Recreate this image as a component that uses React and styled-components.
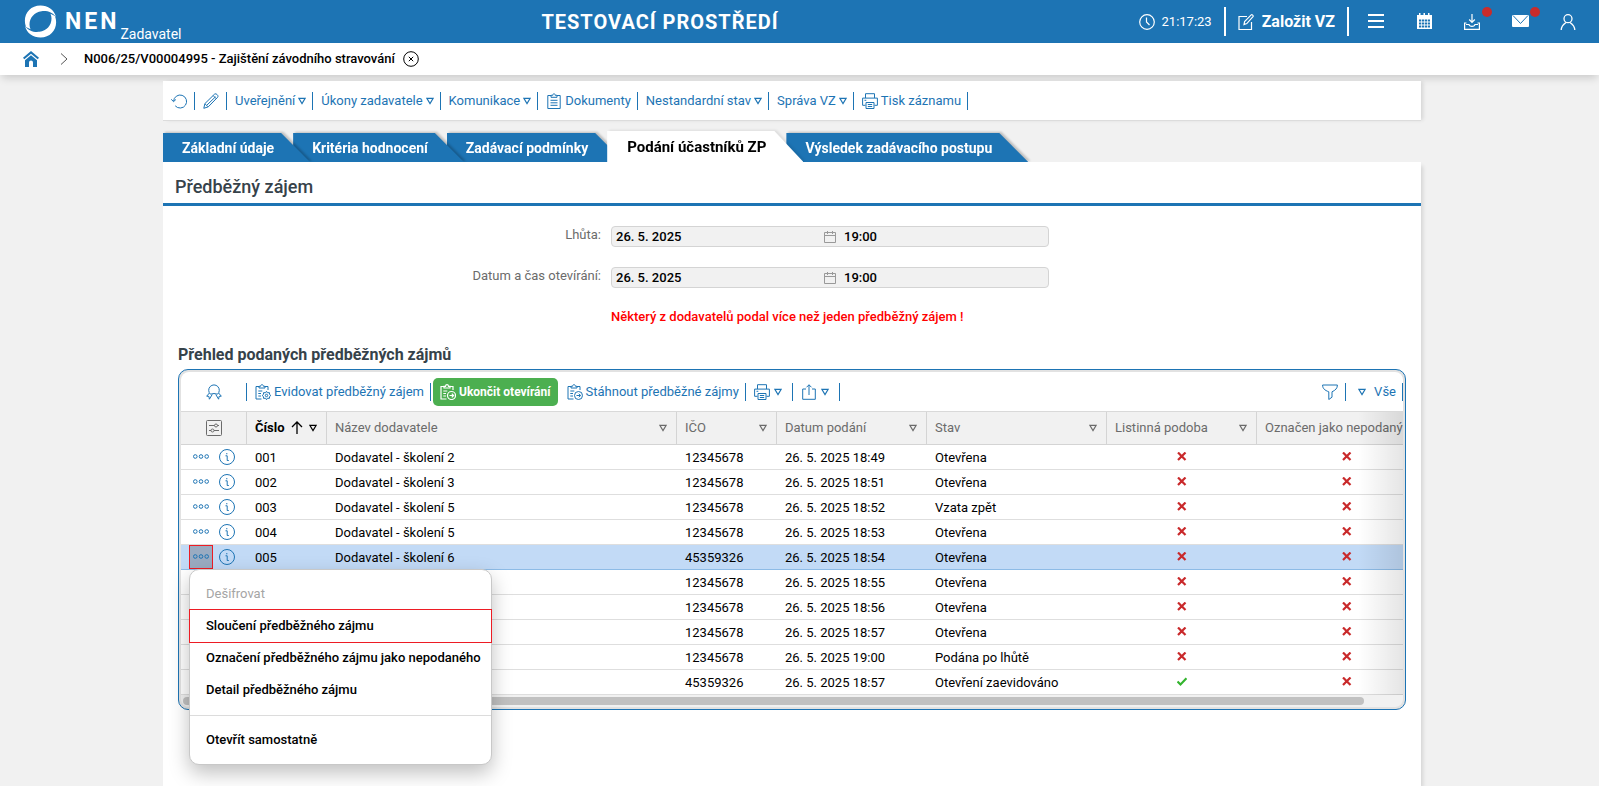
import React, { useState, useCallback } from "react";
import styled, { createGlobalStyle, css } from "styled-components";

const BLUE = "#1d74b4";

const icons = {
  clock: (
    <>
      <circle cx="8" cy="8" r="7.3" />
      <path d="M7.500 3.500V8l3 3" />
    </>
  ),
  edit: (
    <>
      <path d="M9 2.500H1v13h12.500V8" />
      <path d="M6 10.500l.6-3L13.200.9c.8-.7 2.500.8 1.800 1.700L8.800 9.600z" />
    </>
  ),
  download: (
    <>
      <path d="M8 0v8M5.200 5.500L8 8.300l2.800-2.800" />
      <path d="M2.500 9H.6v6.300h14.800V9h-1.900M2 10.500h3c.5 2.500 5.500 2.500 6 0h3" />
    </>
  ),
  user: (
    <>
      <circle cx="8" cy="4.700" r="4" />
      <path d="M1.200 16c0-4 2-5.500 4.800-7.500M14.800 16c0-4-2-5.500-4.800-7.500" />
    </>
  ),
  close: (
    <>
      <circle cx="8" cy="8" r="7.300" />
      <path d="M5.800 5.800l4.400 4.400M10.200 5.800l-4.400 4.400" />
    </>
  ),
  chevron: <path d="M5 2.500L11 8l-6 5.500" />,
  refresh: (
    <>
      <path d="M2.600 8.200A6.500 6.500 0 1 1 4.200 12.800" />
      <path d="M.3 6.300l2.200 2.400L4.900 6.500" />
    </>
  ),
  pencil: (
    <>
      <path d="M.8 15.300l1.100-4.700L11.500 1.200c1.300-1.500 4.500 1.500 3.200 3L5.300 13.800z" />
      <path d="M2 10.800l3 3M10.200 2.600l3.200 3.200M4 12L12.500 3.800" />
    </>
  ),
  clipboard: (
    <>
      <path d="M5 2.500H1.800v13h12.400v-13H11" />
      <path d="M5 4.300V2.300h1.800c.2-2.200 2.200-2.200 2.400 0H11v2zM4.500 7.300h7M4.500 9.800h7M4.500 12.300h7" />
    </>
  ),
  print: (
    <>
      <path d="M3.500 5V.7h9V5M3.500 12.300H.6V5.100h14.800v7.200h-2.900" />
      <path d="M4 9.500h8v6H4zM5.800 11.500h4.400M5.800 13.500h4.400M2.500 7.300h1.800" />
    </>
  ),
  badge: (
    <>
      <path d="M4.500 10.200A5.300 5.300 0 1 1 11.500 10.200Q8 8.800 4.500 10.200z" />
      <path d="M3.400 9L.7 12.200l2.200.2.500 2.800 2.800-4.700M12.600 9l2.700 3.200-2.200.2-.5 2.800-2.800-4.700" />
    </>
  ),
  clipGear: (
    <>
      <path d="M4 2.500H1v12.500h5.500M10 2.500h3V6" />
      <path d="M4 4V2.300h1.500c.2-2.200 2.800-2.200 3 0H10V4zM3.300 7h4M3.300 9.500h2.700M3.300 12h2.700" />
      <circle cx="11.500" cy="11.500" r="1.200" />
      <path d="M11.500 7.300l1 1.500 1.900-.2.200 1.900 1.200 1-1.200 1-.2 1.900-1.900-.2-1 1.500-1-1.500-1.900.2-.2-1.900-1.200-1 1.200-1 .2-1.900 1.900.2z" />
    </>
  ),
  clipArrow: (
    <>
      <path d="M4 2.500H1v12.500h5.500M10 2.500h3V6" />
      <path d="M4 4V2.300h1.500c.2-2.200 2.800-2.200 3 0H10V4zM3.300 7h4M3.300 9.500h2.700M3.300 12h2.700" />
      <circle cx="11.500" cy="11.500" r="4" />
      <path d="M9.500 11.500h4M11.800 9.700l1.800 1.800-1.800 1.800" />
    </>
  ),
  share: (
    <>
      <path d="M5 5H1.700v10.300h12.600V5H11" />
      <path d="M8 11V.8M5.500 3.300L8 .8l2.500 2.500" />
    </>
  ),
  funnel: <path d="M.6 1h14.800c0 3.500-2 5.200-5.400 6.800v5.400l-3.200 2.300V7.800C2.600 6.200.6 4.500.6 1z" />,
  settings: (
    <>
      <rect x=".5" y=".5" width="15" height="15" rx="1" />
      <path d="M3 5.500h5.500M11.500 5.500H13M3 10.500h2M8 10.500h5" />
      <circle cx="10" cy="5.500" r="1.500" />
      <circle cx="6.500" cy="10.500" r="1.500" />
    </>
  ),
  dots: (
    <>
      <circle cx="2.300" cy="7.500" r="1.800" />
      <circle cx="8" cy="7.500" r="1.800" />
      <circle cx="13.700" cy="7.500" r="1.800" />
    </>
  ),
  info: (
    <>
      <circle cx="8" cy="8" r="7.500" />
      <path d="M6.500 6.800h1.700v4.700h1.600M7.800 4v1.300" />
    </>
  ),
  calendar: <path d="M2.500 3.500h11v10h-11zM2.500 6.500h11M5.500 2v3M10.500 2v3" />,
  up: <path d="M8 14V2M3 7l5-5 5 5" />,
};

const Icon = ({ name, size = 16, weight = 1 }) => (
  <Svg width={size} height={size} viewBox="0 0 16 16" strokeWidth={weight}>
    {icons[name]}
  </Svg>
);

const Triangle = () => (
  <Svg width="8" height="8" viewBox="0 0 8 8" strokeWidth="1.100">
    <path d="M.9 1.400h6.200L4 6.600z" />
  </Svg>
);

const recordActions = [
  { label: "Uveřejnění", menu: true },
  { label: "Úkony zadavatele", menu: true },
  { label: "Komunikace", menu: true },
  { label: "Dokumenty", icon: "clipboard" },
  { label: "Nestandardní stav", menu: true },
  { label: "Správa VZ", menu: true },
  { label: "Tisk záznamu", icon: "print" },
];

const tabs = [
  "Základní údaje",
  "Kritéria hodnocení",
  "Zadávací podmínky",
  "Podání účastníků ZP",
  "Výsledek zadávacího postupu",
];

const columns = [
  { label: "Název dodavatele", width: 350 },
  { label: "IČO", width: 100 },
  { label: "Datum podání", width: 150 },
  { label: "Stav", width: 180 },
  { label: "Listinná podoba", width: 150 },
  { label: "Označen jako nepodaný", width: 180 },
];

const rows = [
  ["001", "Dodavatel - školení 2", "12345678", "18:49", "Otevřena"],
  ["002", "Dodavatel - školení 3", "12345678", "18:51", "Otevřena"],
  ["003", "Dodavatel - školení 5", "12345678", "18:52", "Vzata zpět"],
  ["004", "Dodavatel - školení 5", "12345678", "18:53", "Otevřena"],
  ["005", "Dodavatel - školení 6", "45359326", "18:54", "Otevřena"],
  ["", "", "12345678", "18:55", "Otevřena"],
  ["", "", "12345678", "18:56", "Otevřena"],
  ["", "", "12345678", "18:57", "Otevřena"],
  ["", "", "12345678", "19:00", "Podána po lhůtě"],
  ["", "", "45359326", "18:57", "Otevření zaevidováno", true],
];

const Mark = ({ ok }) => (
  <Flag $ok={ok} width="10" height="10" viewBox="0 0 10 10" strokeWidth="2.200">
    {ok ? <path d="M.5 4.500L3.500 7.500 9.500 1.300" /> : <path d="M1 .5L8.500 8M8.500.5L1 8" />}
  </Flag>
);

const DateTimeField = ({ id, label, date, time }) => (
  <>
    <Label htmlFor={id}>{label}</Label>
    <FieldBox>
      <FieldInput id={id} defaultValue={date} readOnly />
      <Icon name="calendar" />
      <FieldInput aria-label={`${label} čas`} defaultValue={time} readOnly />
    </FieldBox>
  </>
);

const App = () => {
  const [activeTab, setActiveTab] = useState(3);
  const [openRow, setOpenRow] = useState(4);
  const toggleRow = useCallback((i) => {
    setOpenRow((current) => (current === i ? -1 : i));
  }, []);

  return (
    <Page>
      <GlobalStyle />
      <Header>
        <Brand href="#">
          <svg width="33" height="33" viewBox="0 0 33 33" fill="#fff">
            <path d="M2 22C-2 11 5 .5 16.500.5 24 .5 30 4.500 32 12c-3.500-5-9-6.500-14.500-5.800C10.500 7.200 5.500 12.500 5.500 19.500c0 1.500.3 3 1 4.800z" />
            <path d="M31 11c4 11-3 21.500-14.500 21.500C9 32.500 3 28.500 1 21c3.500 5 9 6.500 14.500 5.800 7-1 12-6.300 12-13.300 0-1.500-.3-3-1-4.800z" />
          </svg>
          <BrandName>NEN</BrandName>
          <BrandRole>Zadavatel</BrandRole>
        </Brand>
        <EnvTitle>TESTOVACÍ PROSTŘEDÍ</EnvTitle>
        <HeaderTools>
          <Clock>
            <Icon name="clock" weight={1.2} />
            21:17:23
          </Clock>
          <CreateButton>
            <Icon name="edit" weight={1.2} />
            Založit VZ
          </CreateButton>
          <HeaderButton aria-label="Menu">
            <Svg width="16" height="16" viewBox="0 0 16 16" strokeWidth="2">
              <path d="M0 1h16M0 7h16M0 13h16" />
            </Svg>
          </HeaderButton>
          <HeaderButton aria-label="Kalendář">
            <svg width="17" height="17" viewBox="0 0 17 17" fill="#fff">
              <path
                fillRule="evenodd"
                d="M1 2h2V0h1.500v2h3V0H9v2h3V0h1.500v2H16v14H1zM3 6.500v2h2.300v-2zM6 6.500v2h2.300v-2zM9 6.500v2h2.300v-2zM12 6.500v2h2v-2zM3 9.500v2h2.300v-2zM6 9.500v2h2.300v-2zM9 9.500v2h2.300v-2zM12 9.500v2h2v-2zM3 12.500v2h2.300v-2zM6 12.500v2h2.300v-2zM9 12.500v2h2.300v-2zM12 12.500v2h2v-2z"
              />
            </svg>
          </HeaderButton>
          <HeaderButton aria-label="Stažené soubory">
            <Icon name="download" weight={1.2} />
            <Dot />
          </HeaderButton>
          <HeaderButton aria-label="Zprávy">
            <Svg width="17" height="17" viewBox="0 0 17 17" strokeWidth="1">
              <rect x="0" y="2" width="17" height="12" rx="1" fill="#fff" stroke="none" />
              <path d="M1 2.500l7.500 8 7.500-8" stroke={BLUE} />
            </Svg>
            <Dot />
          </HeaderButton>
          <HeaderButton aria-label="Uživatel">
            <Icon name="user" weight={1.3} />
          </HeaderButton>
        </HeaderTools>
      </Header>

      <Breadcrumb>
        <HomeLink href="#" aria-label="Domů">
          <svg width="16" height="16" viewBox="0 0 16 16" fill={BLUE}>
            <path d="M8 0l8 6.800-1.300 1.500L8 2.700 1.300 8.300 0 6.800z" />
            <path d="M2 9.200L8 4.300l6 4.900V16h-4v-4.500a2 2 0 0 0-4 0V16H2z" />
          </svg>
        </HomeLink>
        <Crumb>
          <Icon name="chevron" />
        </Crumb>
        <RecordName>N006/25/V00004995 - Zajištění závodního stravování</RecordName>
        <PlainButton aria-label="Zavřít">
          <Icon name="close" />
        </PlainButton>
      </Breadcrumb>

      <Main>
        <RecordBar>
          <IconAction aria-label="Obnovit">
            <Icon name="refresh" />
          </IconAction>
          <IconAction aria-label="Upravit">
            <Icon name="pencil" />
          </IconAction>
          {recordActions.map((a) => (
            <Action key={a.label}>
              {a.icon && <Icon name={a.icon} />}
              {a.label}
              {a.menu && <Triangle />}
            </Action>
          ))}
        </RecordBar>

        <Tabs>
          {tabs.map((t, i) => (
            <Tab
              key={t}
              $active={i === activeTab}
              $order={tabs.length - i}
              onClick={() => setActiveTab(i)}
            >
              <TabShape $active={i === activeTab}>{t}</TabShape>
            </Tab>
          ))}
        </Tabs>

        <Panel>
          <PanelTitle>Předběžný zájem</PanelTitle>
          <Form>
            <DateTimeField id="deadline" label="Lhůta:" date="26. 5. 2025" time="19:00" />
            <DateTimeField
              id="opening"
              label="Datum a čas otevírání:"
              date="26. 5. 2025"
              time="19:00"
            />
            <Warning>Některý z dodavatelů podal více než jeden předběžný zájem !</Warning>
          </Form>

          <Section>
            <SectionTitle>Přehled podaných předběžných zájmů</SectionTitle>
            <Frame>
              <GridBar>
                <BadgeAction aria-label="Zobrazení">
                  <Icon name="badge" />
                </BadgeAction>
                <Action>
                  <Icon name="clipGear" />
                  Evidovat předběžný zájem
                </Action>
                <FinishButton>
                  <Icon name="clipArrow" weight={1.2} />
                  Ukončit otevírání
                </FinishButton>
                <Action>
                  <Icon name="clipArrow" />
                  Stáhnout předběžné zájmy
                </Action>
                <MenuAction aria-label="Tisk">
                  <Icon name="print" />
                  <Triangle />
                </MenuAction>
                <MenuAction aria-label="Export">
                  <Icon name="share" />
                  <Triangle />
                </MenuAction>
                <Spacer />
                <IconAction aria-label="Filtr">
                  <Icon name="funnel" />
                </IconAction>
                <ViewAction>
                  <Triangle />
                  Vše
                </ViewAction>
              </GridBar>
              <Scroller>
                <Table>
                  <colgroup>
                    <Col $width={66} />
                    <Col $width={80} />
                    {columns.map((c) => (
                      <Col key={c.label} $width={c.width} />
                    ))}
                  </colgroup>
                  <thead>
                    <tr>
                      <Th>
                        <HeadCell $center>
                          <Icon name="settings" />
                        </HeadCell>
                      </Th>
                      <Th $sorted>
                        <HeadCell>
                          Číslo
                          <Icon name="up" weight={1.3} />
                          <Triangle />
                        </HeadCell>
                      </Th>
                      {columns.map((c) => (
                        <Th key={c.label}>
                          <HeadCell $spread>
                            {c.label}
                            <Triangle />
                          </HeadCell>
                        </Th>
                      ))}
                    </tr>
                  </thead>
                  <tbody>
                    {rows.map(([number, name, ico, time, state, paper], i) => (
                      <Row key={i} $selected={i === 4}>
                        <ToolsTd>
                          <RowTools>
                            <MoreButton
                              aria-label="Akce"
                              $open={i === openRow}
                              onClick={() => toggleRow(i)}
                            >
                              <Icon name="dots" />
                            </MoreButton>
                            <PlainButton aria-label="Detail">
                              <Icon name="info" />
                            </PlainButton>
                          </RowTools>
                        </ToolsTd>
                        <Td>{number}</Td>
                        <Td>{name}</Td>
                        <Td>{ico}</Td>
                        <Td>26. 5. 2025 {time}</Td>
                        <Td>{state}</Td>
                        <Td $center>
                          <Mark ok={paper} />
                        </Td>
                        <Td $center>
                          <Mark />
                        </Td>
                      </Row>
                    ))}
                  </tbody>
                </Table>
                <Fade />
              </Scroller>
              <ScrollTrack>
                <ScrollThumb />
              </ScrollTrack>
              {openRow >= 0 && (
                <Menu style={{ top: 99 + openRow * 25 }}>
                  <MenuItem disabled>Dešifrovat</MenuItem>
                  <MenuItem $marked>Sloučení předběžného zájmu</MenuItem>
                  <MenuItem>Označení předběžného zájmu jako nepodaného</MenuItem>
                  <MenuItem>Detail předběžného zájmu</MenuItem>
                  <MenuLine />
                  <MenuItem>Otevřít samostatně</MenuItem>
                </Menu>
              )}
            </Frame>
          </Section>
        </Panel>
      </Main>
    </Page>
  );
};

export default App;

const GlobalStyle = createGlobalStyle`
  * {
    box-sizing: border-box;
  }
  body {
    margin: 0;
    background: #f1f1f1;
    color: #000;
    font-family: Roboto, "Noto Sans", sans-serif;
    font-size: 13px;
    line-height: 16px;
  }
  button,
  input {
    font: inherit;
    color: inherit;
    background: none;
    border: 0;
    padding: 0;
    margin: 0;
  }
  button {
    cursor: pointer;
  }
`;
const Svg = styled.svg`
  display: block;
  flex: none;
  fill: none;
  stroke: currentColor;
`;
const Page = styled.div`
  min-height: 100vh;
  display: flex;
  flex-direction: column;
`;
const Header = styled.header`
  display: flex;
  justify-content: space-between;
  height: 43px;
  padding: 0 7px 0 24px;
  background: ${BLUE};
  color: #fff;
`;
const Brand = styled.a`
  display: flex;
  align-items: center;
  color: #fff;
  text-decoration: none;
`;
const BrandName = styled.span`
  margin-left: 8px;
  font-size: 23px;
  font-weight: 700;
  letter-spacing: 3px;
`;
const BrandRole = styled.span`
  align-self: flex-end;
  padding-bottom: 1px;
  margin-left: 1px;
  font-size: 14px;
`;
const EnvTitle = styled.div`
  align-self: center;
  font-size: 20px;
  font-weight: 700;
  letter-spacing: 1px;
`;
const HeaderTools = styled.div`
  display: flex;
  align-items: center;
  justify-content: flex-end;
`;
const Clock = styled.div`
  display: flex;
  align-items: center;
  gap: 7px;
  padding-right: 12px;
`;
const CreateButton = styled.button`
  display: flex;
  align-items: center;
  gap: 8px;
  height: 29px;
  padding: 0 12px;
  margin-right: 3px;
  border: solid #fff;
  border-width: 0 2px;
  font-size: 16px;
  font-weight: 700;
`;
const HeaderButton = styled.button`
  position: relative;
  display: flex;
  align-items: center;
  justify-content: center;
  width: 48px;
  height: 43px;
`;
const Dot = styled.span`
  position: absolute;
  top: 7px;
  right: 4px;
  width: 10px;
  height: 10px;
  border-radius: 50%;
  background: #c92c2c;
`;
const Breadcrumb = styled.nav`
  display: flex;
  align-items: center;
  height: 32px;
  padding: 0 23px;
  background: #fff;
  box-shadow: 0 5px 8px -2px rgba(0, 0, 0, 0.16);
`;
const HomeLink = styled.a`
  display: flex;
`;
const Crumb = styled.span`
  margin: 0 12px 0 17px;
  color: #555;
`;
const RecordName = styled.span`
  margin-right: 8px;
  font-weight: 500;
`;
const PlainButton = styled.button`
  display: flex;
`;
const Main = styled.main`
  flex: 1;
  display: flex;
  flex-direction: column;
  padding: 6px 178px 0 163px;
`;
const RecordBar = styled.div`
  position: relative;
  display: flex;
  align-items: center;
  height: 40px;
  background: #fff;
  border-bottom: 1px solid #dcdcdc;
  box-shadow: 3px 0 4px -1px rgba(0, 0, 0, 0.12);
`;
const Action = styled.button`
  display: flex;
  align-items: center;
  gap: 3px;
  height: 18px;
  padding: 0 6px 0 8px;
  border-right: 1px solid ${BLUE};
  color: ${BLUE};
  white-space: nowrap;
`;
const IconAction = styled(Action)`
  padding-right: 7px;
`;
const MenuAction = styled(Action)`
  gap: 4px;
  padding-right: 10px;
`;
const BadgeAction = styled(Action)`
  width: 66px;
  justify-content: center;
  padding: 0;
`;
const ViewAction = styled(Action)`
  gap: 8px;
  padding-left: 12px;
`;
const Tabs = styled.div`
  display: flex;
  align-items: flex-end;
  height: 41px;
`;
const Tab = styled.button`
  position: relative;
  z-index: ${(p) => (p.$active ? 9 : p.$order)};
  margin-right: -17px;
  filter: drop-shadow(2px -1px 1px rgba(0, 0, 0, ${(p) => (p.$active ? 0.08 : 0.22)}));
`;
const TabShape = styled.span`
  display: flex;
  align-items: center;
  height: 29px;
  padding: 0 36px 0 19px;
  background: ${BLUE};
  color: #fff;
  font-size: 14px;
  font-weight: 700;
  white-space: nowrap;
  clip-path: polygon(0 0, calc(100% - 29px) 0, 100% 100%, 0 100%);
  ${(p) =>
    p.$active &&
    css`
      height: 31px;
      padding: 0 37px 0 20px;
      background: #fff;
      color: #000;
      font-size: 15px;
    `}
`;
const Panel = styled.section`
  position: relative;
  z-index: 10;
  flex: 1;
  background: #fff;
  box-shadow: 3px 3px 4px -1px rgba(0, 0, 0, 0.12);
`;
const PanelTitle = styled.h1`
  margin: 0;
  padding: 13px 12px 4px;
  border-bottom: 3px solid ${BLUE};
  color: #36424a;
  font-size: 18px;
  line-height: 24px;
  font-weight: 500;
`;
const Form = styled.div`
  display: grid;
  grid-template-columns: 438fr 438fr 362fr;
  column-gap: 10px;
  row-gap: 20px;
  padding-top: 20px;
`;
const Label = styled.label`
  grid-column: 1;
  line-height: 18px;
  text-align: right;
  color: #6b6b6b;
`;
const FieldBox = styled.div`
  display: grid;
  grid-template-columns: 1fr 16px 1fr;
  column-gap: 6px;
  align-items: center;
  height: 21px;
  padding: 0 4px;
  border: 1px solid #d4d4d4;
  border-radius: 4px;
  background: #f1f1f1;
  color: #999;
`;
const FieldInput = styled.input`
  width: 100%;
  color: #000;
  font-weight: 500;
`;
const Warning = styled.p`
  grid-column: 2;
  margin: 0;
  color: #f00;
  font-weight: 500;
  line-height: 18px;
  white-space: nowrap;
`;
const Section = styled.div`
  padding: 19px 15px;
`;
const SectionTitle = styled.h2`
  margin: 0 0 4px;
  color: #36424a;
  font-size: 16px;
  line-height: 20px;
  font-weight: 700;
`;
const Frame = styled.div`
  position: relative;
  padding: 2px;
  border: 1px solid ${BLUE};
  border-radius: 10px;
  background: #e2e2e2;
`;
const GridBar = styled.div`
  display: flex;
  align-items: center;
  height: 40px;
  background: #fff;
  border-bottom: 1px solid #d9d9d9;
  border-radius: 8px 8px 0 0;
`;
const FinishButton = styled.button`
  display: flex;
  align-items: center;
  gap: 3px;
  height: 28px;
  margin: 0 1px 0 2px;
  padding: 0 7px;
  border-radius: 5px;
  background: #4caf50;
  color: #fff;
  font-size: 12px;
  font-weight: 700;
  white-space: nowrap;
`;
const Spacer = styled.div`
  flex: 1;
`;
const Scroller = styled.div`
  position: relative;
  overflow: hidden;
`;
const Table = styled.table`
  width: 1256px;
  table-layout: fixed;
  border-spacing: 0;
  background: #fff;
`;
const Col = styled.col`
  width: ${(p) => p.$width}px;
`;
const Th = styled.th`
  height: 33px;
  padding: 0;
  background: #f1f1f1;
  border: solid #d4d4d4;
  border-width: 0 1px 1px 0;
  color: ${(p) => (p.$sorted ? "#000" : "#6b6b6b")};
  font-weight: ${(p) => (p.$sorted ? 700 : 400)};
  text-align: left;
`;
const HeadCell = styled.div`
  display: flex;
  align-items: center;
  justify-content: ${(p) => (p.$center ? "center" : p.$spread ? "space-between" : "flex-start")};
  gap: 4px;
  padding: ${(p) => (p.$center ? "0" : "0 9px 0 8px")};
  white-space: nowrap;
`;
const Td = styled.td`
  height: 25px;
  padding: 2px 8px 0;
  border-bottom: 1px solid #dedede;
  text-align: ${(p) => (p.$center ? "center" : "left")};
  white-space: nowrap;
`;
const ToolsTd = styled(Td)`
  padding-top: 0;
`;
const Row = styled.tr`
  background: ${(p) => (p.$selected ? "#c2daf6" : "#fff")};
  ${(p) =>
    p.$selected &&
    css`
      ${Td} {
        border-bottom-color: #8dbbe6;
      }
    `}
`;
const RowTools = styled.div`
  display: flex;
  align-items: center;
  gap: 6px;
  color: ${BLUE};
`;
const MoreButton = styled.button`
  display: flex;
  align-items: center;
  justify-content: center;
  width: 24px;
  height: 24px;
  ${(p) =>
    p.$open &&
    css`
      background: #9aabc1;
      outline: 1px solid #ed1c24;
      outline-offset: -1px;
    `}
`;
const Flag = styled(Svg)`
  display: inline-block;
  color: ${(p) => (p.$ok ? "#33b42e" : "#c9292b")};
`;
const Fade = styled.div`
  position: absolute;
  inset: 0 0 0 auto;
  width: 45px;
  background: linear-gradient(to right, rgba(0, 0, 0, 0), rgba(0, 0, 0, 0.1));
  pointer-events: none;
`;
const ScrollTrack = styled.div`
  height: 12px;
  padding: 2px;
  background: #f1f1f1;
  border-radius: 0 0 8px 8px;
`;
const ScrollThumb = styled.div`
  width: 97%;
  height: 8px;
  border-radius: 4px;
  background: #c1c1c1;
`;
const Menu = styled.div`
  position: absolute;
  left: 10px;
  padding: 8px 0;
  border: 1px solid #c8c8c8;
  border-radius: 10px;
  background: #fff;
  box-shadow: 0 8px 20px rgba(0, 0, 0, 0.25);
`;
const MenuItem = styled.button`
  display: block;
  width: 100%;
  height: 32px;
  padding: 0 10px 0 16px;
  font-weight: 500;
  text-align: left;
  white-space: nowrap;
  &:disabled {
    color: #a5a5a5;
    font-weight: 400;
  }
  ${(p) =>
    p.$marked &&
    css`
      outline: 1px solid #ed1c24;
    `}
`;
const MenuLine = styled.hr`
  margin: 9px 0 8px;
  border: 0;
  border-top: 1px solid #dcdcdc;
`;
